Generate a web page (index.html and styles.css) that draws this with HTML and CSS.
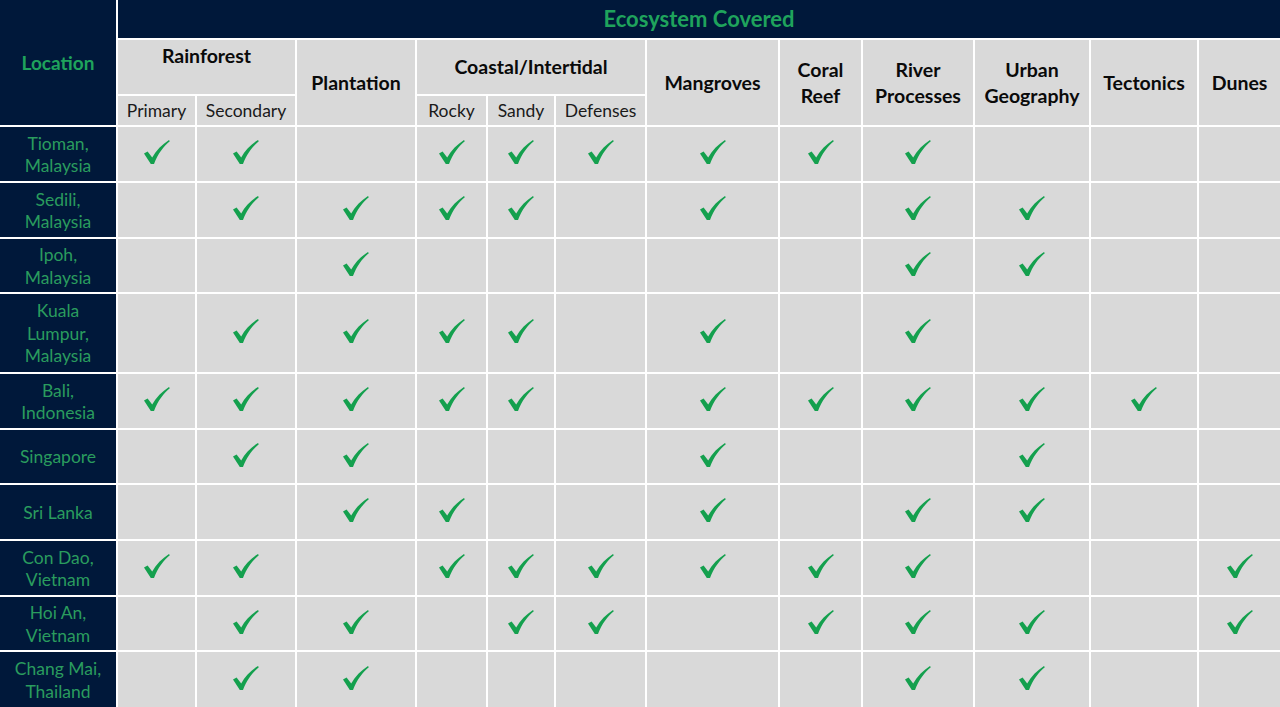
FILE: index.html
```html
<!DOCTYPE html>
<html>
<head>
<meta charset="utf-8">
<link rel="stylesheet" href="styles.css">
</head>
<body>
<svg class="defs" width="0" height="0">
  <symbol id="chk" viewBox="0 0 26 24">
    <path d="M0 13.6 L3.6 11.4 L8.2 17.6 C12 10.5 18 4.5 25 0 L25.8 1.2 C19.5 6.5 14 13.5 10 24 L6.8 24 Z"/>
  </symbol>
</svg>
<table class="grid">
  <colgroup>
    <col style="width:117px"><col style="width:79px"><col style="width:100px"><col style="width:120px">
    <col style="width:71px"><col style="width:68px"><col style="width:91px"><col style="width:133px">
    <col style="width:83px"><col style="width:112px"><col style="width:116px"><col style="width:108px">
    <col style="width:82px">
  </colgroup>
  <thead>
    <tr class="h1">
      <th class="loc-head" rowspan="3">Location</th>
      <th class="eco" colspan="12">Ecosystem Covered</th>
    </tr>
    <tr class="h2">
      <th class="group top" colspan="2">Rainforest</th>
      <th class="group" rowspan="2">Plantation</th>
      <th class="group" colspan="3">Coastal/Intertidal</th>
      <th class="group" rowspan="2">Mangroves</th>
      <th class="group" rowspan="2">Coral<br>Reef</th>
      <th class="group" rowspan="2">River<br>Processes</th>
      <th class="group" rowspan="2">Urban<br>Geography</th>
      <th class="group" rowspan="2">Tectonics</th>
      <th class="group" rowspan="2">Dunes</th>
    </tr>
    <tr class="h3">
      <th class="sub">Primary</th>
      <th class="sub">Secondary</th>
      <th class="sub">Rocky</th>
      <th class="sub">Sandy</th>
      <th class="sub">Defenses</th>
    </tr>
  </thead>
  <tbody id="body"></tbody>
</table>
<script src="app.js"></script>
</body>
</html>
```

FILE: app.js
```js
const rows = [
  ["Tioman,<br>Malaysia", "110111111000", 56],
  ["Sedili,<br>Malaysia", "011110101100", 56],
  ["Ipoh,<br>Malaysia", "001000001100", 55],
  ["Kuala<br>Lumpur,<br>Malaysia", "011110101000", 80],
  ["Bali,<br>Indonesia", "111110111110", 56],
  ["Singapore", "011000100100", 55],
  ["Sri Lanka", "001100101100", 56],
  ["Con Dao,<br>Vietnam", "110111111001", 56],
  ["Hoi An,<br>Vietnam", "011011011101", 55],
  ["Chang Mai,<br>Thailand", "011000001100", 56]
];
const body = document.getElementById("body");
const chk = '<svg class="chk" viewBox="0 0 26 24"><use href="#chk"/></svg>';
rows.forEach(([name, marks, h]) => {
  const tr = document.createElement("tr");
  tr.style.height = h + "px";
  let html = '<th class="loc">' + name + '</th>';
  for (let i = 0; i < 12; i++) {
    html += '<td>' + (marks[i] === "1" ? chk : "") + '</td>';
  }
  tr.innerHTML = html;
  body.appendChild(tr);
});
```

FILE: styles.css
```css
html, body {
  margin: 0;
  padding: 0;
  background: #d9d9d9;
}
body {
  font-family: Lato, "Open Sans", sans-serif;
  overflow: hidden;
}
.defs {
  position: absolute;
}
.grid {
  width: 1280px;
  table-layout: fixed;
  border-collapse: collapse;
  border-style: hidden;
}
.grid th,
.grid td {
  border: 2px solid #ffffff;
  padding: 0;
  text-align: center;
  vertical-align: middle;
}
.h1 { height: 39px; }
.h2 { height: 56px; }
.h3 { height: 31px; }
.loc-head {
  background: #00183a;
  color: #1fa35c;
  font-weight: 700;
  font-size: 19px;
  border-top: 0;
}
.eco {
  background: #00183a;
  color: #1fa35c;
  font-weight: 700;
  font-size: 22px;
  padding-bottom: 2px !important;
}
.group {
  background: #d9d9d9;
  color: #0a0a0a;
  font-weight: 700;
  font-size: 19.5px;
  line-height: 26px;
}
.group.top {
  vertical-align: top;
  padding-top: 3px !important;
}
.sub {
  background: #d9d9d9;
  color: #1a1a1a;
  font-weight: 400;
  font-size: 17.5px;
}
.loc {
  background: #00183a;
  color: #2a9c5e;
  font-weight: 400;
  font-size: 17.5px;
  line-height: 22.5px;
  padding-top: 2px !important;
}
.grid td {
  background: #d9d9d9;
}
.chk {
  display: block;
  width: 26px;
  height: 24px;
  margin: -4px auto 0;
  fill: #14a04e;
}
```
